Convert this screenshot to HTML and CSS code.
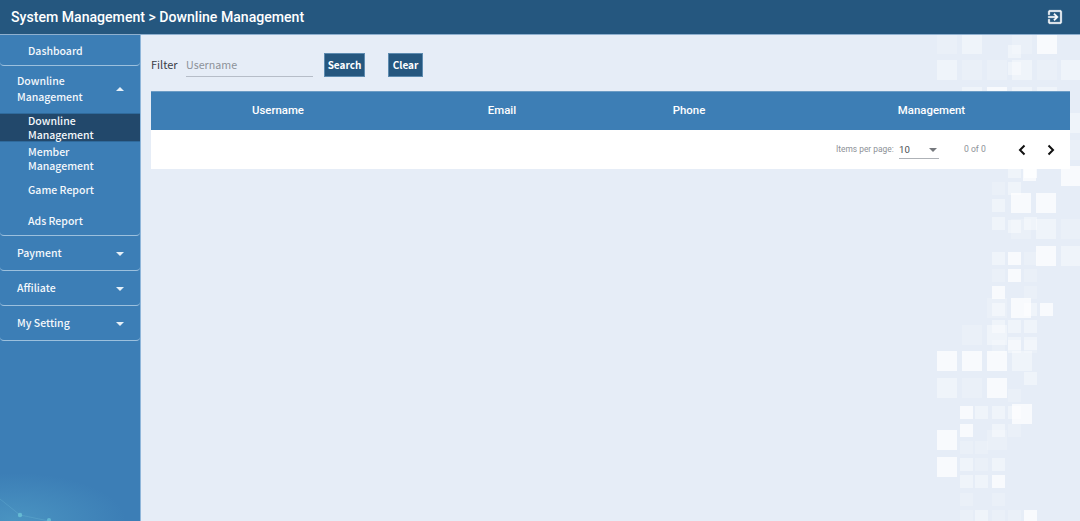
FILE: index.html
```html
<!DOCTYPE html>
<html lang="en">
<head>
<meta charset="utf-8">
<title>Downline Management</title>
<link rel="stylesheet" href="styles.css">
</head>
<body>
<header class="topbar">
  <h1 class="topbar-title">System Management &gt; Downline Management</h1>
  <svg class="exit-icon" viewBox="0 0 24 24"><path d="M10.09 15.59L11.5 17l5-5-5-5-1.41 1.41L12.67 11H3v2h9.67l-2.58 2.59zM19 3H5c-1.11 0-2 .9-2 2v4h2V5h14v14H5v-4H3v4c0 1.1.89 2 2 2h14c1.1 0 2-.9 2-2V5c0-1.1-.9-2-2-2z"/></svg>
</header>
<div class="shell">
  <nav class="sidebar">
    <a class="link link-top">Dashboard</a>
    <section class="panel">
      <div class="panel-head panel-head-open"><span class="panel-label">Downline<br>Management</span><i class="caret caret-up"></i></div>
      <a class="sub sub-active">Downline<br>Management</a>
      <a class="sub sub-member">Member<br>Management</a>
      <a class="sub sub-one">Game Report</a>
      <a class="sub sub-one sub-last">Ads Report</a>
    </section>
    <section class="panel"><div class="panel-head"><span class="panel-label">Payment</span><i class="caret"></i></div></section>
    <section class="panel"><div class="panel-head"><span class="panel-label">Affiliate</span><i class="caret"></i></div></section>
    <section class="panel"><div class="panel-head"><span class="panel-label">My Setting</span><i class="caret"></i></div></section>
    <svg class="sidebar-glow" viewBox="0 0 140 60">
      <defs><radialGradient id="glow" cx="0.1" cy="1" r="0.8"><stop offset="0" stop-color="#5fb4d2" stop-opacity=".4"/><stop offset="1" stop-color="#5fb4d2" stop-opacity="0"/></radialGradient></defs>
      <rect width="140" height="60" fill="url(#glow)"/>
      <path class="glow-line" d="M0 38L20 54L49 60"/>
      <circle class="glow-dot" cx="20" cy="54" r="2.2"/>
      <circle class="glow-dot" cx="49" cy="59" r="2"/>
    </svg>
  </nav>
  <main class="content">
    <svg class="squares" viewBox="141 35 939 486" aria-hidden="true">
      <g class="a1"><rect class="b" x="937" y="34"/><rect class="b" x="1012" y="34"/><rect class="b" x="962" y="60"/><rect class="b" x="987" y="60"/><rect class="b" x="1037" y="60"/><rect class="b" x="1061" y="140"/><rect class="b" x="1011" y="219"/><rect class="b" x="1061" y="219"/><rect class="b" x="962" y="378"/><rect class="b" x="987" y="430"/><rect class="b" x="987" y="298"/><rect class="b" x="962" y="325"/><rect class="s" x="992" y="182"/><rect class="s" x="992" y="269"/><rect class="s" x="1024" y="269"/><rect class="s" x="1024" y="252"/><rect class="s" x="1024" y="286"/><rect class="s" x="960" y="441"/><rect class="s" x="975" y="441"/><rect class="s" x="975" y="458"/><rect class="s" x="960" y="493"/><rect class="s" x="992" y="493"/><rect class="s" x="960" y="510"/><rect class="s" x="992" y="510"/><rect class="s" x="1008" y="510"/><rect class="s" x="1008" y="424"/><rect class="s" x="1008" y="389"/><rect class="s" x="992" y="340"/><rect class="s" x="1024" y="340"/></g>
      <g class="a2"><rect class="b" x="962" y="34"/><rect class="b" x="937" y="60"/><rect class="b" x="1012" y="60"/><rect class="b" x="1061" y="60"/><rect class="b" x="1061" y="113"/><rect class="b" x="962" y="87"/><rect class="b" x="1012" y="87"/><rect class="b" x="1037" y="87"/><rect class="b" x="1036" y="219"/><rect class="b" x="1061" y="246"/><rect class="b" x="987" y="325"/><rect class="b" x="1012" y="351"/><rect class="b" x="937" y="378"/><rect class="s" x="1008" y="45"/><rect class="s" x="1008" y="62"/><rect class="s" x="1008" y="165"/><rect class="s" x="992" y="217"/><rect class="s" x="992" y="252"/><rect class="s" x="1008" y="220"/><rect class="s" x="1024" y="217"/><rect class="s" x="992" y="303"/><rect class="s" x="1024" y="303"/><rect class="s" x="992" y="320"/><rect class="s" x="1008" y="320"/><rect class="s" x="1024" y="320"/><rect class="s" x="1008" y="337"/><rect class="s" x="1024" y="337"/><rect class="s" x="1008" y="340"/><rect class="s" x="975" y="406"/><rect class="s" x="992" y="406"/><rect class="s" x="1008" y="406"/><rect class="s" x="992" y="424"/><rect class="s" x="960" y="458"/><rect class="s" x="992" y="458"/><rect class="s" x="960" y="475"/><rect class="s" x="975" y="475"/><rect class="s" x="975" y="510"/><rect class="s" x="1024" y="372"/><rect class="s" x="1008" y="182"/><rect class="s" x="992" y="199"/></g>
      <g class="a3"><rect class="b" x="1037" y="34"/><rect class="b" x="987" y="87"/><rect class="b" x="1061" y="166"/><rect class="b" x="1011" y="193"/><rect class="b" x="1036" y="193"/><rect class="b" x="1036" y="246"/><rect class="b" x="1011" y="298"/><rect class="b" x="937" y="351"/><rect class="b" x="962" y="351"/><rect class="b" x="987" y="351"/><rect class="b" x="987" y="378"/><rect class="b" x="1012" y="404"/><rect class="b" x="937" y="430"/><rect class="b" x="937" y="457"/><rect class="s" x="1024" y="165"/><rect class="s" x="1023" y="168"/><rect class="s" x="1008" y="252"/><rect class="s" x="1008" y="269"/><rect class="s" x="992" y="286"/><rect class="s" x="1040" y="303"/><rect class="s" x="960" y="406"/><rect class="s" x="960" y="424"/><rect class="s" x="992" y="475"/><rect class="s" x="1024" y="510"/></g>
    </svg>
    <form class="filter">
      <label class="filter-label">Filter</label>
      <span class="filter-input">Username</span>
      <button class="btn btn-search" type="button">Search</button>
      <button class="btn btn-clear" type="button">Clear</button>
    </form>
    <div class="grid-card">
      <div class="grid-head">
        <span>Username</span><span>Email</span><span>Phone</span><span class="col-manage">Management</span>
      </div>
      <div class="paginator">
        <span class="per-page">Items per page:</span>
        <span class="page-select"><span>10</span><i class="select-arrow"></i></span>
        <span class="range">0 of 0</span>
        <svg class="chev chev-prev" viewBox="0 0 8 12"><path d="M6.5 1.5L2 6l4.5 4.5"/></svg>
        <svg class="chev chev-next" viewBox="0 0 8 12"><path d="M1.5 1.5L6 6l-4.5 4.5"/></svg>
      </div>
    </div>
  </main>
</div>
</body>
</html>
```

FILE: styles.css
```css
* { box-sizing: border-box; }
html, body { height: 100%; }
body {
  margin: 0;
  display: flex;
  flex-direction: column;
  overflow: hidden;
  background: #e6edf7;
  font-family: "Noto Sans CJK TC", "Noto Sans", sans-serif;
}
.topbar {
  flex: 0 0 35px;
  display: flex;
  align-items: center;
  justify-content: space-between;
  padding: 0 16px 0 11px;
  background: #25577f;
  border-bottom: 1px solid #8fb0cf;
}
.topbar-title {
  margin: 0;
  font: 500 14.1px/1 Roboto, sans-serif;
  color: #fff;
}
.exit-icon { width: 18px; height: 18px; fill: #fff; stroke: #fff; stroke-width: .5; }
.shell { flex: 1; display: flex; min-height: 0; }
.sidebar {
  position: relative;
  flex: 0 0 141px;
  display: flex;
  flex-direction: column;
  background: #3c7eb6;
  border-right: 1px solid #8fb6da;
  color: #f4f8fc;
  font-size: 10.5px;
  font-weight: 500;
}
.link-top {
  flex: 0 0 31px;
  display: flex;
  align-items: center;
  padding-left: 28px;
  border-bottom: 1px solid #9cc0dd;
  border-radius: 0 0 4px 4px;
}
.panel {
  display: flex;
  flex-direction: column;
  border-bottom: 1px solid #9cc0dd;
  border-radius: 0 0 4px 4px;
}
.panel-head {
  height: 34px;
  display: flex;
  align-items: center;
  justify-content: space-between;
  padding: 0 16px 1px 17px;
}
.panel-head-open { height: 47px; line-height: 16px; padding-bottom: 2px; }
.caret {
  margin-top: 2px;
  border-left: 4px solid transparent;
  border-right: 4px solid transparent;
  border-top: 4px solid #e6f0f8;
}
.caret-up { margin-top: 0; border-top: 0; border-bottom: 4px solid #e6f0f8; }
.sub { display: block; padding-left: 28px; line-height: 14px; }
.sub-active {
  height: 29px;
  background: #22486b;
  border-top: 1px solid #2f6a9c;
  border-bottom: 1px solid #2f6a9c;
}
.sub-member { padding-top: 3px; height: 33px; }
.sub-one { height: 31px; padding-top: 8px; }
.sub-last { height: 29px; }
.sidebar-glow {
  position: absolute;
  left: 0;
  bottom: 0;
  width: 140px;
  height: 60px;
}
.glow-line { fill: none; stroke: #76c0da; stroke-width: .5; opacity: .55; }
.glow-dot { fill: #6cc3d8; opacity: .8; }
.content {
  position: relative;
  flex: 1;
  min-width: 0;
  padding: 18px 10px 0 10px;
}
.squares {
  position: absolute;
  inset: 0;
  width: 939px;
  height: 486px;
  filter: blur(.4px);
}
.squares .b { width: 20px; height: 20px; }
.squares .s { width: 13px; height: 13px; }
.a1 { fill: #fff; fill-opacity: .17; }
.a2 { fill: #fff; fill-opacity: .38; }
.a3 { fill: #fff; fill-opacity: .7; }
.filter {
  position: relative;
  height: 38px;
  display: flex;
  align-items: flex-start;
}
.filter-label {
  margin: 3px 7px 0 0;
  width: 28px;
  font-size: 11px;
  line-height: 17px;
  color: #3b4047;
}
.filter-input {
  width: 127px;
  height: 24px;
  padding-top: 4px;
  font-size: 10.7px;
  line-height: 16px;
  color: #8d9299;
  border-bottom: 1px solid #b6bdc8;
}
.btn {
  height: 24px;
  padding: 0;
  margin-left: 23px;
  background: #25577f;
  border: 1px solid #5d8bb0;
  color: #fff;
  font: 700 10px/1 "Noto Sans CJK TC", "Noto Sans", sans-serif;
}
.btn-search { margin-left: 11px; width: 41px; }
.btn-clear { width: 35px; }
.grid-card { position: relative; width: 919px; }
.grid-head {
  height: 39px;
  display: grid;
  grid-template-columns: 254px 194px 180px 291px;
  align-items: center;
  text-align: center;
  background: #3d7eb5;
  border-top: 1px solid #6c9cc5;
  color: #fff;
  font: 500 11.4px/1 Roboto, sans-serif;
}
.col-manage { padding-left: 14px; }
.paginator {
  height: 39px;
  display: flex;
  align-items: center;
  justify-content: flex-end;
  background: #fff;
  font: 400 8.4px/1 Roboto, sans-serif;
  color: #8d9197;
  padding-right: 15px;
}
.per-page { width: 63px; }
.page-select {
  width: 40px;
  height: 18px;
  display: flex;
  align-items: center;
  justify-content: space-between;
  padding: 2px 1px 0 0;
  margin-right: 25px;
  border-bottom: 1px solid #aeb2b7;
  color: #4a4e54;
  font-size: 9.6px;
}
.select-arrow {
  margin-right: 1px;
  border-left: 4px solid transparent;
  border-right: 4px solid transparent;
  border-top: 4px solid #75787d;
}
.range { width: 33px; font-size: 8.6px; }
.chev { width: 8px; height: 12px; fill: none; stroke: #111; stroke-width: 2; }
.chev-prev { margin-left: 21px; }
.chev-next { margin-left: 21px; }
```
